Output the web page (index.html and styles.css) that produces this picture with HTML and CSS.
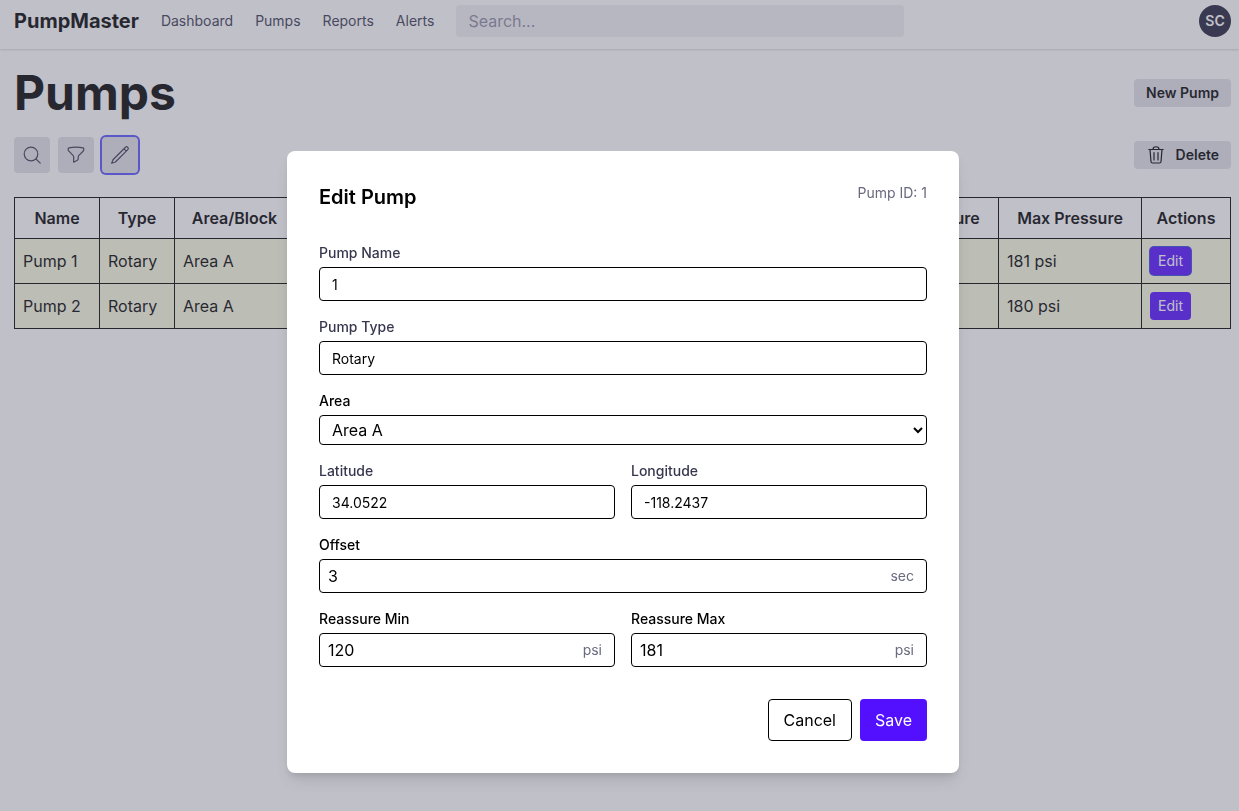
FILE: index.html
```html
<!DOCTYPE html>
<html lang="en">
<head>
<meta charset="utf-8">
<meta name="viewport" content="width=device-width, initial-scale=1">
<title>PumpMaster</title>
<link rel="stylesheet" href="styles.css">
</head>
<body>
<header class="topbar">
  <a class="brand" href="#">PumpMaster</a>
  <nav class="nav">
    <a href="#">Dashboard</a>
    <a href="#">Pumps</a>
    <a href="#">Reports</a>
    <a href="#">Alerts</a>
  </nav>
  <input class="search" type="search" placeholder="Search..." aria-label="Search">
  <button class="avatar" type="button" aria-label="Account">SC</button>
</header>

<main class="page">
  <div class="row">
    <h1 class="title">Pumps</h1>
    <button class="btn-soft" type="button">New Pump</button>
  </div>
  <div class="row">
    <div class="tools">
      <button class="btn-icon" type="button" aria-label="Search pumps">
        <svg class="icon" viewBox="0 0 20 20"><circle cx="9" cy="9" r="6.8"/><path d="M14 14l4.200 4.200"/></svg>
      </button>
      <button class="btn-icon" type="button" aria-label="Filter">
        <svg class="icon" viewBox="0 0 20 20"><path d="M10 2.200c-2.500 0-4.800.2-7 .6-.5.1-.8.500-.8 1v.8c0 .6.2 1.200.7 1.600l4.100 4.100c.5.5.7 1.100.7 1.700v5.200l3.600-1.900c.6-.3.9-.8.900-1.500v-1.800c0-.6.2-1.200.7-1.700l4.200-4.100c.4-.4.700-1 .7-1.600v-.8c0-.5-.3-.9-.8-1-2.200-.4-4.500-.6-7-.6z"/></svg>
      </button>
      <button class="btn-icon is-active" type="button" aria-label="Edit pumps">
        <svg class="icon" viewBox="0 0 20 20"><path d="M15.500 2.300a1.600 1.600 0 0 1 2.300 2.300L5.400 17 1.700 18.300 3 14.700zM14 3.800l2.300 2.300"/></svg>
      </button>
    </div>
    <button class="btn-soft" type="button">
      <svg class="icon" viewBox="0 0 20 20"><path d="M2.800 4.500h14.400M7 4.300c0-3.400 6-3.400 6 0M4 4.600l1 12.200c.1.800.6 1.200 1.400 1.200h7.200c.8 0 1.300-.4 1.400-1.200l1-12.200M8 7.500v7.500M12 7.500v7.500"/></svg>
      Delete
    </button>
  </div>
  <table class="pumps">
    <colgroup>
      <col class="col-name"><col class="col-type"><col class="col-area"><col><col><col class="col-min"><col class="col-max"><col class="col-actions">
    </colgroup>
    <thead>
      <tr><th>Name</th><th>Type</th><th>Area/Block</th><th>Location</th><th>Offset</th><th>Min Pressure</th><th>Max Pressure</th><th>Actions</th></tr>
    </thead>
    <tbody>
      <tr><td>Pump 1</td><td>Rotary</td><td>Area A</td><td></td><td></td><td></td><td>181 psi</td><td><button class="btn-edit is-focused" type="button">Edit</button></td></tr>
      <tr><td>Pump 2</td><td>Rotary</td><td>Area A</td><td></td><td></td><td></td><td>180 psi</td><td><button class="btn-edit" type="button">Edit</button></td></tr>
    </tbody>
  </table>
</main>

<div class="overlay">
  <form class="dialog" role="dialog" aria-labelledby="dialog-title">
    <div class="dialog-head">
      <h2 class="dialog-title" id="dialog-title">Edit Pump</h2>
      <span class="muted">Pump ID: 1</span>
    </div>
    <div class="fields">
      <div class="field">
        <label class="label label-soft" for="name">Pump Name</label>
        <input class="input" id="name" type="text" value="1">
      </div>
      <div class="field">
        <label class="label label-soft" for="type">Pump Type</label>
        <input class="input" id="type" type="text" value="Rotary">
      </div>
      <div class="field">
        <label class="label" for="area">Area</label>
        <select class="select" id="area"><option>Area A</option></select>
      </div>
      <div class="pair">
        <div class="field">
          <label class="label label-soft" for="lat">Latitude</label>
          <input class="input" id="lat" type="text" value="34.0522">
        </div>
        <div class="field">
          <label class="label label-soft" for="lng">Longitude</label>
          <input class="input" id="lng" type="text" value="-118.2437">
        </div>
      </div>
      <div class="field">
        <label class="label" for="offset">Offset</label>
        <div class="unit-box"><input class="unit-input" id="offset" type="text" value="3"><span class="muted">sec</span></div>
      </div>
      <div class="pair">
        <div class="field">
          <label class="label" for="min">Reassure Min</label>
          <div class="unit-box"><input class="unit-input" id="min" type="text" value="120"><span class="muted">psi</span></div>
        </div>
        <div class="field">
          <label class="label" for="max">Reassure Max</label>
          <div class="unit-box"><input class="unit-input" id="max" type="text" value="181"><span class="muted">psi</span></div>
        </div>
      </div>
    </div>
    <div class="actions">
      <button class="btn btn-outline" type="button">Cancel</button>
      <button class="btn btn-primary" type="submit">Save</button>
    </div>
  </form>
</div>
</body>
</html>
```
FILE: styles.css
```css
* { box-sizing: border-box; }

body {
  margin: 0;
  background: #fff;
  color: #000;
  font: 16px/24px Inter, "Liberation Sans", sans-serif;
}

button, input, select { font: inherit; color: inherit; }
button { border: 0; cursor: pointer; }
a { color: inherit; text-decoration: none; }
h1, h2 { margin: 0; }

.topbar {
  display: flex;
  align-items: center;
  gap: 22px;
  padding: 5px 8px 12px 14px;
  box-shadow: 0 1px 2px rgba(0, 0, 0, .16);
}
.brand { font-size: 20px; line-height: 28px; font-weight: 700; }
.nav {
  display: flex;
  gap: 22px;
  font-size: 14px;
  line-height: 20px;
  color: #37384f;
}
.search {
  flex: 0 1 448px;
  min-width: 0;
  height: 32px;
  padding: 0 12px;
  border: 0;
  border-radius: 4px;
  background: #f1f1f3;
}
.search::placeholder { color: #8a8aa0; opacity: 1; }
.avatar {
  width: 32px;
  height: 32px;
  margin-left: auto;
  padding: 0;
  border-radius: 50%;
  background: #1f2038;
  color: #fff;
  font-size: 14px;
  font-weight: 600;
}

.page {
  display: flex;
  flex-direction: column;
  padding: 20px 8px 20px 14px;
}
.row {
  display: flex;
  align-items: center;
  justify-content: space-between;
}
.row + .row { margin-top: 20px; }
.title {
  font-size: 48px;
  line-height: 48px;
  font-weight: 700;
}
.tools { display: flex; gap: 8px; }
.btn-icon {
  display: grid;
  place-items: center;
  width: 36px;
  height: 36px;
  padding: 0;
  border-radius: 4px;
  background: #e2e2e8;
  color: #37384f;
}
.is-active { box-shadow: 0 0 0 2px #5750ff; }
.icon {
  width: 20px;
  height: 20px;
  fill: none;
  stroke: currentColor;
  stroke-width: 1.2;
  stroke-linecap: round;
  stroke-linejoin: round;
}
.btn-soft {
  display: flex;
  align-items: center;
  gap: 10px;
  height: 28px;
  padding: 0 12px;
  border-radius: 4px;
  background: #e2e2e8;
  font-size: 14px;
  line-height: 20px;
  font-weight: 600;
}

.pumps {
  width: 100%;
  margin-top: 24px;
  border-collapse: collapse;
  table-layout: fixed;
}
.pumps th, .pumps td { border: 1px solid #000; padding: 8px; }
.pumps th { font-weight: 600; padding: 8px 0; }
.pumps td { height: 45px; }
.pumps tbody { background: #f9fbde; }
.col-name { width: 85px; }
.col-type { width: 75px; }
.col-area { width: 120px; }
.col-min { width: 139px; }
.col-max { width: 143px; }
.col-actions { width: 89px; }
.btn-edit {
  display: block;
  height: 28px;
  padding: 0 8px;
  border-radius: 4px;
  background: #5210ff;
  color: #fff;
  font-size: 14px;
  line-height: 20px;
}
.is-focused { box-shadow: 0 0 0 1px #3248d8; }

.overlay {
  position: fixed;
  inset: 0;
  display: flex;
  align-items: flex-start;
  justify-content: center;
  padding: 151px 8px 16px 15px;
  overflow: auto;
  background: rgba(97, 97, 121, .4);
}
.dialog {
  width: 100%;
  max-width: 672px;
  padding: 32px;
  border-radius: 8px;
  background: #fff;
  box-shadow: 0 10px 15px -3px rgba(0, 0, 0, .1), 0 4px 6px -2px rgba(0, 0, 0, .1);
}
.dialog-head {
  display: flex;
  align-items: flex-start;
  justify-content: space-between;
  margin-bottom: 32px;
}
.dialog-title { font-size: 20px; line-height: 28px; font-weight: 600; }
.muted { font-size: 14px; line-height: 20px; color: #69697f; }
.fields, .field { display: flex; flex-direction: column; }
.fields { gap: 16px; }
.field { gap: 4px; min-width: 0; }
.pair { display: grid; grid-template-columns: 1fr 1fr; gap: 16px; }
.label { font-size: 14px; line-height: 20px; font-weight: 500; }
.label-soft { color: #37384f; }
.input, .select, .unit-box {
  width: 100%;
  border: 1px solid #000;
  border-radius: 4px;
  background: #fff;
}
.input { height: 34px; padding: 0 12px; font-size: 14px; line-height: 20px; }
.select { height: 30px; padding: 0 0 0 8px; }
.unit-box { display: flex; align-items: center; height: 34px; padding: 0 12px 0 8px; }
.unit-input {
  flex: 1;
  min-width: 0;
  padding: 0;
  border: 0;
  background: none;
  outline: 0;
}
.actions {
  display: flex;
  justify-content: flex-end;
  gap: 8px;
  margin-top: 32px;
}
.btn { height: 42px; padding: 0 15px; border-radius: 4px; }
.btn-outline { border: 1px solid #000; background: #fff; }
.btn-primary { background: #5210ff; color: #fff; }
```
